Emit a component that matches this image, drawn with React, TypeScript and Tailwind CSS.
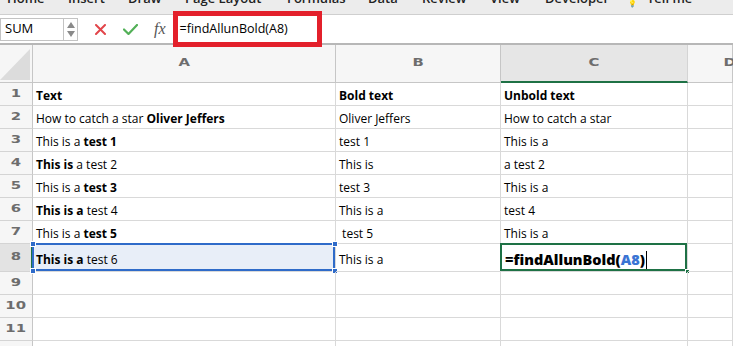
import React from 'react';

type Run = { t: string; b?: boolean };

const rows: Run[][][] = [
  [[{ t: 'Text', b: true }], [{ t: 'Bold text', b: true }], [{ t: 'Unbold text', b: true }]],
  [[{ t: 'How to catch a star ' }, { t: 'Oliver Jeffers', b: true }], [{ t: 'Oliver Jeffers' }], [{ t: 'How to catch a star' }]],
  [[{ t: 'This is a ' }, { t: 'test 1', b: true }], [{ t: 'test 1' }], [{ t: 'This is a' }]],
  [[{ t: 'This is', b: true }, { t: ' a test 2' }], [{ t: 'This is' }], [{ t: 'a test 2' }]],
  [[{ t: 'This is a ' }, { t: 'test 3', b: true }], [{ t: 'test 3' }], [{ t: 'This is a' }]],
  [[{ t: 'This is a', b: true }, { t: ' test 4' }], [{ t: 'This is a' }], [{ t: 'test 4' }]],
  [[{ t: 'This is a ' }, { t: 'test 5', b: true }], [{ t: '\u00a0test 5' }], [{ t: 'This is a' }]],
];

const menu = [
  { label: 'Home', w: 'w-[61px]' },
  { label: 'Insert', w: 'w-[60px]' },
  { label: 'Draw', w: 'w-[57px]' },
  { label: 'Page Layout', w: 'w-[102px]' },
  { label: 'Formulas', w: 'w-[81px]' },
  { label: 'Data', w: 'w-[54px]' },
  { label: 'Review', w: 'w-[68px]' },
  { label: 'View', w: 'w-[55px]' },
  { label: 'Developer', w: 'w-[83px]' },
];

const cellText = "font-['Open_Sans',sans-serif] text-[12px] text-black whitespace-nowrap";
const headFont = "font-['DejaVu_Sans',sans-serif] font-bold text-[#6d6d6d]";

const Runs = ({ runs }: { runs: Run[] }) => (
  <span className={cellText}>
    {runs.map((r, i) => (
      <span key={i} className={r.b ? 'font-bold' : ''}>
        {r.t}
      </span>
    ))}
  </span>
);

const RowHead = ({ n, active }: { n: number; active?: boolean }) => (
  <div
    className={`flex items-center justify-center border-b border-[#d4d4d4] ${
      active ? 'bg-[#e3e3e3] border-r-2 border-r-[#1e7145]' : 'bg-[#f6f6f6] border-r border-r-[#c6c6c6]'
    }`}
  >
    <span className={`${headFont} text-[11px] inline-block scale-x-[1.35] ${active ? 'text-[#1e7145]' : ''}`}>{n}</span>
  </div>
);

const Cell = ({ children, className = '' }: { children?: React.ReactNode; className?: string }) => (
  <div className={`relative flex items-center pl-[3px] pt-[4px] border-b border-r border-[#d9d9d9] overflow-visible ${className}`}>
    {children}
  </div>
);

const Handle = ({ className }: { className: string }) => (
  <div className={`absolute w-[6px] h-[6px] bg-[#2f6bc9] border border-white ${className}`} />
);

export default function App() {
  return (
    <div className="w-[733px] h-[346px] overflow-hidden bg-white relative">
      {/* ribbon tabs, cut off at the top */}
      <div className="h-[15px] bg-[#ececec] border-b border-[#cfcfcf] overflow-hidden">
        <div className="flex items-start pl-[7px] -mt-[11px] font-['Open_Sans',sans-serif] font-semibold text-[13px] text-[#222] whitespace-nowrap">
          {menu.map((m) => (
            <div key={m.label} className={m.w}>
              {m.label}
            </div>
          ))}
          <div className="w-[19px] pt-[10px] text-[7px] text-[#555]">💡</div>
          <div>Tell me</div>
        </div>
      </div>

      {/* formula bar */}
      <div className="h-[30px] flex items-center border-b-2 border-[#b7b7b7] bg-white">
        <div className="w-[78px] h-[23px] flex border border-[#c3c3c3] bg-white">
          <div className="flex-1 flex items-center pl-[4px] font-['Open_Sans',sans-serif] text-[13px] text-black">SUM</div>
          <div className="w-[14px] border-l border-[#c3c3c3] flex flex-col items-center justify-center gap-[3px]">
            <svg width="8" height="6" viewBox="0 0 8 6">
              <path d="M4 0 L8 6 L0 6 Z" fill="#8a8a8a" />
            </svg>
            <svg width="8" height="6" viewBox="0 0 8 6">
              <path d="M0 0 L8 0 L4 6 Z" fill="#8a8a8a" />
            </svg>
          </div>
        </div>
        <div className="w-[17px]" />
        <svg width="11" height="11" viewBox="0 0 11 11">
          <path d="M1 1 L10 10 M10 1 L1 10" stroke="#e2454a" strokeWidth="2" strokeLinecap="round" />
        </svg>
        <svg width="15" height="11" viewBox="0 0 15 11" className="ml-[17px]">
          <path d="M1 5.5 L5.5 10 L14 1" stroke="#52b057" strokeWidth="2.2" fill="none" strokeLinecap="round" strokeLinejoin="round" />
        </svg>
        <span className="ml-[16px] font-['Liberation_Serif',serif] italic text-[16px] text-[#555] leading-none">fx</span>
        <span className="ml-[14px] font-['Open_Sans',sans-serif] text-[12.5px] text-black">=findAllunBold(A8)</span>
      </div>

      {/* annotation box around the formula */}
      <div className="absolute left-[173px] top-[11px] w-[149px] h-[36px] border-[5px] border-[#e3202b]" />

      {/* sheet grid */}
      <div className="grid grid-cols-[33px_303px_165px_187px_1fr] grid-rows-[38px_repeat(7,23px)_28px_repeat(4,23px)]">
        {/* header row */}
        <div className="relative bg-[#f6f6f6] border-b border-r border-[#c6c6c6] overflow-hidden">
          <svg width="32" height="37" viewBox="0 0 32 37" className="absolute left-0 top-0">
            <path d="M30 4 L30 35 L0 35 Z" fill="#dcdcdc" />
          </svg>
        </div>
        {['A', 'B', 'C', 'D'].map((c) => (
          <div
            key={c}
            className={`flex items-center justify-center ${
              c === 'C'
                ? 'bg-[#e6e6e6] border-b-2 border-b-[#1e7145] border-r border-r-[#d4d4d4]'
                : 'bg-[#f6f6f6] border-b border-r border-[#c6c6c6]'
            } ${c === 'D' ? 'justify-end pr-0' : ''}`}
          >
            <span
              className={`${headFont} text-[11px] inline-block scale-x-[1.35] ${c === 'C' ? 'text-[#1e7145]' : ''} ${
                c === 'D' ? 'translate-x-[2px]' : ''
              }`}
            >
              {c}
            </span>
          </div>
        ))}

        {rows.map((r, i) => (
          <React.Fragment key={i}>
            <RowHead n={i + 1} />
            <Cell>
              <Runs runs={r[0]} />
            </Cell>
            <Cell>
              <Runs runs={r[1]} />
            </Cell>
            <Cell>
              <Runs runs={r[2]} />
            </Cell>
            <Cell />
          </React.Fragment>
        ))}

        {/* row 8 */}
        <RowHead n={8} active />
        <Cell className="bg-[#e8eef8]">
          <div className="absolute -left-[1px] -top-[1px] right-0 bottom-0 border-2 border-[#2f6bc9]" />
          <Handle className="-left-[3px] -top-[3px]" />
          <Handle className="-right-[3px] -top-[3px]" />
          <Handle className="-left-[3px] -bottom-[3px]" />
          <Handle className="-right-[3px] -bottom-[3px]" />
          <Runs runs={[{ t: 'This is a', b: true }, { t: ' test 6' }]} />
        </Cell>
        <Cell>
          <Runs runs={[{ t: 'This is a' }]} />
        </Cell>
        <Cell className="pl-[4px]">
          <div className="absolute -left-[1px] -top-[1px] right-0 bottom-0 border-2 border-[#1e7145]" />
          <div className="absolute -right-[3px] -bottom-[3px] w-[5px] h-[5px] bg-[#1e7145] border border-white" />
          <span className="font-['Open_Sans',sans-serif] font-extrabold text-[14.5px] text-black whitespace-nowrap flex items-center">
            =findAllunBold(<span className="text-[#3a74d4]">A8</span>)
            <span className="inline-block w-[1px] h-[18px] bg-black ml-[1px]" />
          </span>
        </Cell>
        <Cell />

        {[9, 10, 11, 12].map((n) => (
          <React.Fragment key={n}>
            <RowHead n={n} />
            <Cell />
            <Cell />
            <Cell />
            <Cell />
          </React.Fragment>
        ))}
      </div>
    </div>
  );
}
